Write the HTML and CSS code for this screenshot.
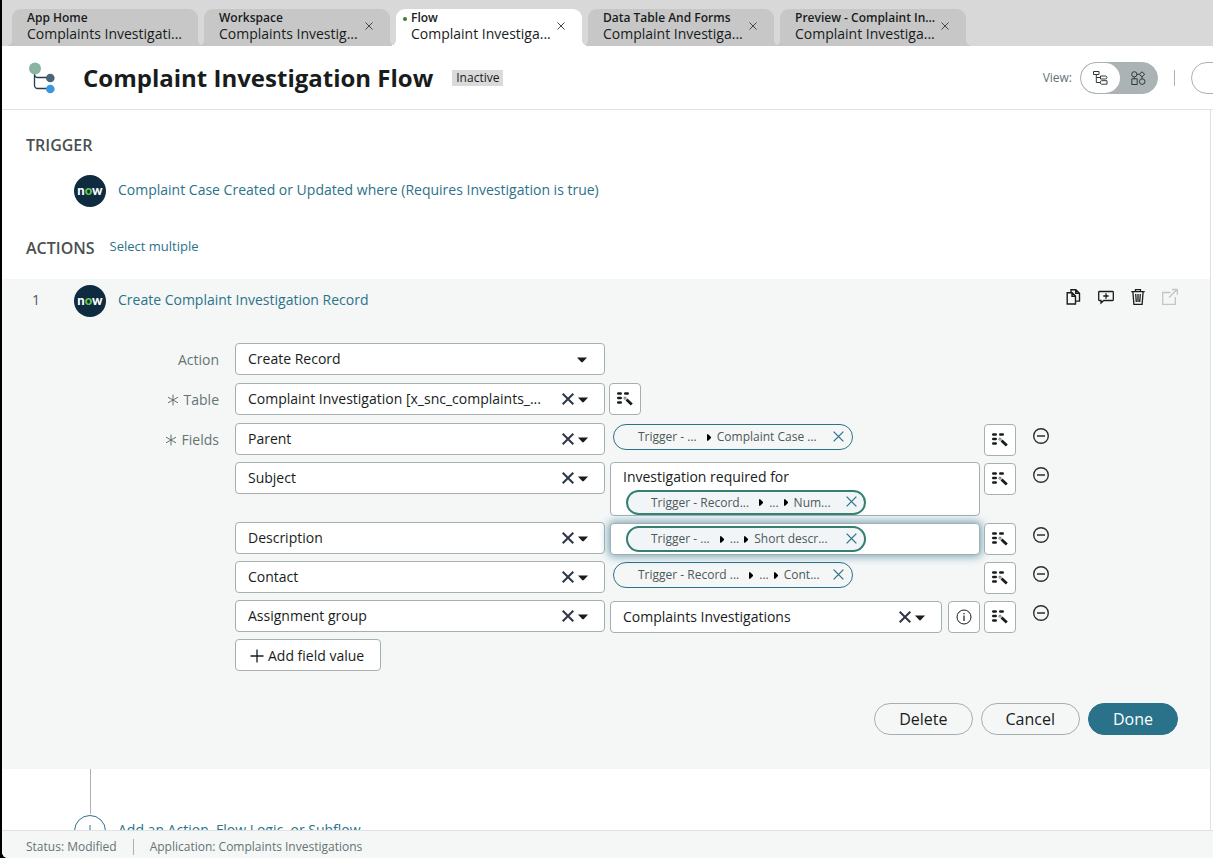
FILE: index.html
```html
<!DOCTYPE html>
<html lang="en">
<head>
<meta charset="utf-8">
<title>Complaint Investigation Flow</title>
<link rel="stylesheet" href="styles.css">
</head>
<body>
<svg class="defs" aria-hidden="true">
  <symbol id="x" viewBox="0 0 12 12"><path d="M.7.7l10.600 10.600M11.300.7L.7 11.300" fill="none" stroke="currentColor"/></symbol>
  <symbol id="caret" viewBox="0 0 10 6"><path d="M0 .5h10L5.600 5.300H4.400z" fill="currentColor"/></symbol>
  <symbol id="next" viewBox="0 0 5 8"><path d="M0 0h1.500L5 3.500v1L1.500 8H0z" fill="currentColor"/></symbol>
  <symbol id="picker" viewBox="0 0 16 14">
    <path d="M1.300 1.500h2.400M8.300 1.500h2.400M1.300 6h2.400M1.300 10.500h2.400" stroke="currentColor" stroke-width="2.600" stroke-linecap="round"/>
    <path d="M9.500 7.600l5.300 5" stroke="currentColor" stroke-width="2.800"/>
    <circle cx="8" cy="6.200" r="1.100" fill="none" stroke="currentColor" stroke-width=".6"/>
  </symbol>
  <symbol id="minus" viewBox="0 0 16 16"><circle cx="8" cy="8" r="7.300" fill="none" stroke="currentColor" stroke-width="1.400"/><path d="M4 8h8" stroke="currentColor" stroke-width="1.500"/></symbol>
  <symbol id="star" viewBox="0 0 12 12"><path d="M6 .5v11M1 3.200l10 5.600M11 3.200L1 8.800" stroke="currentColor" fill="none"/></symbol>
</svg>
<div class="app">
  <nav class="tabs">
    <div class="tab"><div class="tab-text"><b>App Home</b><span>Complaints Investigati...</span></div></div>
    <div class="tab"><div class="tab-text"><b>Workspace</b><span>Complaints Investig...</span></div><button class="tab-close" aria-label="Close"><svg><use href="#x"/></svg></button></div>
    <div class="tab active"><i class="dot"></i><div class="tab-text"><b>Flow</b><span>Complaint Investiga...</span></div><button class="tab-close" aria-label="Close"><svg><use href="#x"/></svg></button></div>
    <div class="tab"><div class="tab-text"><b>Data Table And Forms</b><span>Complaint Investiga...</span></div><button class="tab-close" aria-label="Close"><svg><use href="#x"/></svg></button></div>
    <div class="tab"><div class="tab-text"><b>Preview - Complaint In...</b><span>Complaint Investiga...</span></div><button class="tab-close" aria-label="Close"><svg><use href="#x"/></svg></button></div>
  </nav>

  <header class="header">
    <svg class="flow-logo" viewBox="0 0 26 32"><path d="M5.500 8v15q0 3.500 3.500 3.500h12M5.500 12q0 3.500 3.500 3.500h12" fill="none" stroke="#273c48" stroke-width="1.300"/><circle cx="6" cy="6.500" r="6" fill="#8ab4a2"/><circle cx="21.300" cy="16" r="4.300" fill="#49657d"/><circle cx="21.300" cy="27" r="4.300" fill="#3c97df"/></svg>
    <h1>Complaint Investigation Flow</h1>
    <span class="badge">Inactive</span>
    <div class="view">
      <span>View:</span>
      <div class="toggle">
        <button class="on" aria-label="List view"><svg width="15" height="14" viewBox="0 0 15 14"><path d="M.5.5h5.500v3H.5zM3.300 3.500v8h4M3.300 6.500h4M7.500 5h4.800q1.700 0 1.700 1.500T12.300 8H7.500zM8.500 9.700h5.500v3.500H8.500q-1.200 0-1.200-1.700t1.200-1.800z" fill="none" stroke="#2e3a3c"/></svg></button>
        <button aria-label="Diagram view"><svg width="15" height="14" viewBox="0 0 15 14"><path d="M.8 7.800h5.400v5.700H.8zM11 .8l2.700 2.500L11 5.800 8.300 3.300zM5.900 3.300h2.400M3.300 6v1.800M11 5.800v2" fill="none" stroke="#2e3a3c"/><circle cx="3.300" cy="3.300" r="2.600" fill="none" stroke="#2e3a3c"/><circle cx="11.200" cy="10.600" r="2.800" fill="none" stroke="#2e3a3c"/></svg></button>
      </div>
      <i class="divider"></i>
      <button class="more" aria-label="More actions"></button>
    </div>
  </header>

  <main class="main">
    <h2>TRIGGER</h2>
    <div class="step trigger"><span class="now"><span>n<em>o</em>w</span></span><a href="#">Complaint Case Created or Updated where (Requires Investigation is true)</a></div>
    <div class="actions-head"><h2>ACTIONS</h2><a href="#">Select multiple</a></div>

    <section class="card">
      <div class="step">
        <span class="num">1</span><span class="now"><span>n<em>o</em>w</span></span><a href="#">Create Complaint Investigation Record</a>
        <div class="tools">
          <button aria-label="Copy"><svg width="16" height="18" viewBox="0 0 16 18"><path d="M1.200 4.700h5L9.500 8v8H1.200zM5 4.500V1.700h4.800L13.500 5.200v7.900H9.800M6 5v3.300H9.500M9.700 2v3.300H13.500" fill="none" stroke="currentColor" stroke-width="1.400"/></svg></button>
          <button aria-label="Add comment"><svg width="16" height="18" viewBox="0 0 16 18"><path d="M1.500 3.500h13q.8 0 .8.800v7.400q0 .8-.8.800H5.800L3 15v-2.500H1.500q-.8 0-.8-.8V4.300q0-.8.8-.8zM8 5.300v5.400M5.300 8h5.400" fill="none" stroke="currentColor" stroke-width="1.300"/></svg></button>
          <button aria-label="Delete action"><svg width="16" height="18" viewBox="0 0 16 18"><path d="M1.300 3.700h13.400M5.500 3.500V1.700h5v1.800M2.900 4l1 12.300h8.200l1-12.300M5.700 6l.6 8M8 6v8M10.300 6l-.6 8" fill="none" stroke="currentColor" stroke-width="1.300"/></svg></button>
          <button class="off" aria-label="Open" disabled><svg width="16" height="18" viewBox="0 0 16 18"><path d="M8.500 4.500H.7v11.800h12.600V9M7 9.500l8-8M10 1.500h5.300v5.300" fill="none" stroke="currentColor" stroke-width="1.300"/></svg></button>
        </div>
      </div>

      <form class="form" onsubmit="return false">
        <div class="row wide"><label for="f1">Action</label><div class="combo single"><select id="f1"><option>Create Record</option></select><svg class="caret"><use href="#caret"/></svg></div></div>
        <div class="row wide"><label for="f2"><svg class="star"><use href="#star"/></svg>Table</label><div class="combo"><select id="f2"><option>Complaint Investigation [x_snc_complaints_...</option></select><button class="clear" aria-label="Clear"><svg><use href="#x"/></svg></button><svg class="caret"><use href="#caret"/></svg></div><button class="pick" aria-label="Data picker"><svg><use href="#picker"/></svg></button></div>

        <div class="row"><label for="f3"><svg class="star"><use href="#star"/></svg>Fields</label><div class="combo"><select id="f3"><option>Parent</option></select><button class="clear" aria-label="Clear"><svg><use href="#x"/></svg></button><svg class="caret"><use href="#caret"/></svg></div>
          <div class="value plain"><div class="pill"><span>Trigger - ...</span><svg class="next"><use href="#next"/></svg><span>Complaint Case ...</span><button aria-label="Remove"><svg><use href="#x"/></svg></button></div></div>
          <button class="pick" aria-label="Data picker"><svg><use href="#picker"/></svg></button><button class="minus" aria-label="Remove field"><svg><use href="#minus"/></svg></button></div>

        <div class="row"><span></span><div class="combo"><select aria-label="Field 2"><option>Subject</option></select><button class="clear" aria-label="Clear"><svg><use href="#x"/></svg></button><svg class="caret"><use href="#caret"/></svg></div>
          <div class="value tall"><div class="box stacked"><input type="text" aria-label="Subject value" value="Investigation required for"><div class="pill strong"><span>Trigger - Record...</span><svg class="next"><use href="#next"/></svg><span>...</span><svg class="next"><use href="#next"/></svg><span>Num...</span><button aria-label="Remove"><svg><use href="#x"/></svg></button></div></div></div>
          <button class="pick" aria-label="Data picker"><svg><use href="#picker"/></svg></button><button class="minus" aria-label="Remove field"><svg><use href="#minus"/></svg></button></div>

        <div class="row"><span></span><div class="combo"><select aria-label="Field 3"><option>Description</option></select><button class="clear" aria-label="Clear"><svg><use href="#x"/></svg></button><svg class="caret"><use href="#caret"/></svg></div>
          <div class="value"><div class="box focus"><div class="pill strong"><span>Trigger - ...</span><svg class="next"><use href="#next"/></svg><span>...</span><svg class="next"><use href="#next"/></svg><span>Short descr...</span><button aria-label="Remove"><svg><use href="#x"/></svg></button></div><input type="text" aria-label="Description value"></div></div>
          <button class="pick" aria-label="Data picker"><svg><use href="#picker"/></svg></button><button class="minus" aria-label="Remove field"><svg><use href="#minus"/></svg></button></div>

        <div class="row"><span></span><div class="combo"><select aria-label="Field 4"><option>Contact</option></select><button class="clear" aria-label="Clear"><svg><use href="#x"/></svg></button><svg class="caret"><use href="#caret"/></svg></div>
          <div class="value plain"><div class="pill"><span>Trigger - Record ...</span><svg class="next"><use href="#next"/></svg><span>...</span><svg class="next"><use href="#next"/></svg><span>Cont...</span><button aria-label="Remove"><svg><use href="#x"/></svg></button></div></div>
          <button class="pick" aria-label="Data picker"><svg><use href="#picker"/></svg></button><button class="minus" aria-label="Remove field"><svg><use href="#minus"/></svg></button></div>

        <div class="row"><span></span><div class="combo"><select aria-label="Field 5"><option>Assignment group</option></select><button class="clear" aria-label="Clear"><svg><use href="#x"/></svg></button><svg class="caret"><use href="#caret"/></svg></div>
          <div class="value"><div class="combo"><select aria-label="Assignment group value"><option>Complaints Investigations</option></select><button class="clear" aria-label="Clear"><svg><use href="#x"/></svg></button><svg class="caret"><use href="#caret"/></svg></div><button class="info" aria-label="Info"><svg width="16" height="16" viewBox="0 0 16 16"><circle cx="8" cy="8" r="7" fill="none" stroke="currentColor"/><path d="M8 6.500V12M8 4v1.200" stroke="currentColor" stroke-width="1.200"/></svg></button></div>
          <button class="pick" aria-label="Data picker"><svg><use href="#picker"/></svg></button><button class="minus" aria-label="Remove field"><svg><use href="#minus"/></svg></button></div>

        <div class="row"><span></span><button class="add"><svg width="14" height="14" viewBox="0 0 14 14"><path d="M7 .5v13M.5 7h13" stroke="currentColor" stroke-width="1.300"/></svg>Add field value</button></div>
      </form>

      <div class="buttons"><button>Delete</button><button>Cancel</button><button class="primary">Done</button></div>
    </section>

    <div class="tail">
      <i class="line"></i>
      <div class="step"><button class="plus" aria-label="Add"><svg width="12" height="12" viewBox="0 0 12 12"><path d="M6 0v12M0 6h12" stroke="currentColor"/></svg></button><a href="#">Add an Action, Flow Logic, or Subflow</a></div>
    </div>
  </main>

  <footer class="footer"><span>Status: Modified</span><i></i><span>Application: Complaints Investigations</span></footer>
</div>
</body>
</html>
```
FILE: styles.css
```css
* { box-sizing: border-box; }
body { margin: 0; background: #000; color: #181c1c; font: 14px/20px "Open Sans", "Noto Sans", sans-serif; }
button, input, select { font: inherit; color: inherit; margin: 0; }
button { padding: 0; border: 0; background: none; display: flex; align-items: center; justify-content: center; }
svg { display: block; flex: none; }
a { color: #2a7289; text-decoration: none; }
h1, h2 { margin: 0; }
.defs { position: absolute; width: 0; height: 0; }

.app { height: 100vh; margin-left: 2px; display: flex; flex-direction: column; background: #fff; overflow: hidden; border-bottom-left-radius: 6px; }

.tabs { flex: none; display: flex; gap: 6px; height: 46px; padding: 9px 10px 0; background: #d8d8d8; }
.tab { position: relative; display: flex; width: 186px; padding: 1px 17px 0 15px; background: #c7c7c7; border-radius: 9px 9px 0 0; --c: #c7c7c7; }
.tab::before, .tab::after { content: ""; position: absolute; bottom: 0; width: 6px; height: 6px; }
.tab::before { left: -6px; background: radial-gradient(circle at 0 0, transparent 6px, var(--c) 6px); }
.tab::after { right: -6px; background: radial-gradient(circle at 100% 0, transparent 6px, var(--c) 6px); }
.tab.active { --c: #fff; background: #fff; z-index: 1; }
.tab-text { flex: 1; min-width: 0; line-height: 16px; white-space: nowrap; }
.tab-text b, .tab-text span { display: block; }
.tab-text b { font-size: 12px; font-weight: 600; }
.tab-close { flex: none; height: 32px; color: #3d4a50; }
.tab-close svg { width: 8px; height: 8px; stroke-width: 1.5; }
.dot { position: absolute; left: 7px; top: 8px; width: 4px; height: 4px; border-radius: 50%; background: #36802d; }

.header { flex: none; display: flex; align-items: center; height: 64px; padding-left: 27px; border-bottom: 1px solid #e0e2e2; overflow: hidden; }
.flow-logo { width: 26px; height: 32px; }
h1 { margin-left: 28px; font-size: 24px; line-height: 32px; font-weight: 700; white-space: nowrap; }
.badge { margin: 1px 0 0 19px; padding: 0 4px; background: #dadada; font-size: 12px; line-height: 16px; }
.view { margin-left: auto; margin-right: -68px; display: flex; align-items: center; font-size: 12px; color: #647474; }
.toggle { display: flex; width: 78px; height: 32px; margin-left: 8px; border: 1px solid #a9b3b3; border-radius: 16px; background: #abb3b4; overflow: hidden; }
.toggle button { flex: 1; }
.toggle .on { flex: none; width: 39px; background: #fff; border-radius: 16px; }
.divider { width: 1px; height: 16px; margin: 0 16px; background: #a9b3b3; }
.more { width: 90px; height: 32px; border: 1px solid #a9b3b3; border-radius: 16px; }

.main { flex: 1; min-height: 0; overflow: hidden; margin-right: 2px; padding-top: 23px; border-right: 1px solid #e0e2e2; }
h2 { padding-left: 24px; font-size: 16px; line-height: 24px; font-weight: 600; color: #4a5050; }
.step { display: flex; align-items: center; gap: 12px; padding-left: 72px; }
.step a { line-height: 30px; padding-bottom: 2px; }
.trigger { margin-top: 18px; }
.now { display: flex; align-items: center; justify-content: center; width: 32px; height: 32px; padding-bottom: 3px; border-radius: 50%; background: #0e2b40; color: #fff; font: 900 13px/16px Lato, sans-serif; }
.now em { font-style: normal; color: #62c84e; }
.actions-head { display: flex; align-items: center; gap: 15px; margin-top: 29px; }
.actions-head a { font-size: 13px; line-height: 20px; padding-bottom: 4px; }

.card { margin-top: 19px; padding: 6px 32px 34px 0; background: #f5f7f7; }
.card > .step { padding-left: 30px; }
.num { width: 30px; padding-bottom: 2px; color: #4d5858; }
.tools { display: flex; gap: 16px; margin-left: auto; padding-bottom: 8px; }
.tools .off { color: #c1c5c5; }

.form { display: flex; flex-direction: column; gap: 6px; margin-top: 26px; }
.row { display: grid; grid-template-columns: 229px minmax(0, 370px) minmax(0, 371px) 32px 29px; column-gap: 4px; align-items: start; min-height: 33px; }
.row.wide { grid-template-columns: 229px minmax(0, 370px) 32px; min-height: 34px; }
.row > label { display: flex; align-items: center; justify-content: flex-end; gap: 5px; height: 33px; padding-right: 12px; color: #647474; }
.star { width: 12px; height: 12px; }

.combo { display: flex; align-items: center; flex: 1; min-width: 0; height: 32px; padding-right: 16px; border: 1px solid #a5afaf; border-radius: 4px; background: #fff; }
.combo.single { padding-right: 17px; }
.combo select { flex: 1; min-width: 0; height: 30px; padding: 0 0 0 12px; border: 0; background: transparent; appearance: none; text-overflow: ellipsis; outline: 0; }
.caret { width: 10px; height: 6px; margin-top: 1px; }
.clear { margin-right: 4px; color: #2c3644; }
.clear svg { width: 12px; height: 12px; stroke-width: 2; }
.pick, .info { width: 32px; height: 32px; border: 1px solid #a5afaf; border-radius: 4px; background: #fff; }
.row:not(.wide) > .pick { margin-top: 1px; }
.pick svg { width: 16px; height: 14px; }
.minus { height: 16px; margin: 5px 0 0 13px; color: #292f30; }
.minus svg { width: 16px; height: 16px; }

.value { display: flex; gap: 6px; padding: 1px 0 0 1px; }
.value.tall { padding-top: 0; }
.value.plain { padding-left: 4px; }
.value .info { flex: none; }
.box { display: flex; align-items: center; flex: 1; min-width: 0; height: 32px; padding-left: 15px; border: 1px solid #a5afaf; border-radius: 4px; background: #fff; }
.box.stacked { flex-direction: column; align-items: flex-start; height: 54px; gap: 3px; padding-top: 4px; }
.box input { flex: 1; min-width: 0; border: 0; padding: 0; background: transparent; outline: 0; }
.box.stacked input { flex: none; width: 100%; height: 20px; margin-left: -3px; }
.box.focus { box-shadow: 0 0 8px 2px #7fa9b9; }
.pill { display: flex; align-items: center; width: 240px; height: 26px; padding: 0 8px 0 24px; border: 1px solid #2a7289; border-radius: 13px; font-size: 12px; line-height: 16px; color: #4c5959; white-space: nowrap; }
.pill.strong { border: 2px solid #347f72; background: #f2f5f7; padding: 0 7px 0 23px; }
.pill .next { width: 4px; height: 7px; margin: 0 6px 0 10px; color: #000; }
.pill .next ~ .next { margin-left: 5px; }
.pill button { margin-left: auto; padding-bottom: 2px; color: #2a7289; }
.pill button svg { width: 11px; height: 11px; stroke-width: 1.4; }
#x path { stroke-width: inherit; }

.add { justify-self: start; gap: 4px; height: 32px; padding: 1px 16px 0 14px; border: 1px solid #a5afaf; border-radius: 4px; background: #fff; }

.buttons { display: flex; justify-content: flex-end; gap: 8px; margin-top: 31px; }
.buttons button { height: 32px; padding: 0 24px; border: 1px solid #a5afaf; border-radius: 16px; font-size: 16px; }
.buttons .primary { background: #2a7289; border-color: #2a7289; color: #fff; }

.tail .line { display: block; width: 1px; height: 45px; margin-left: 88px; background: #a9b3b3; }
.tail .step { margin-top: 1px; }
.plus { width: 32px; height: 32px; border: 1px solid #2a7289; border-radius: 50%; color: #2a7289; }

.footer { flex: none; display: flex; align-items: center; gap: 16px; height: 28px; padding: 4px 24px 0; border-top: 1px solid #dfe2e2; background: #f5f7f7; font-size: 12px; line-height: 16px; color: #647474; }
.footer i { width: 1px; height: 16px; background: #a9b3b3; }
```
